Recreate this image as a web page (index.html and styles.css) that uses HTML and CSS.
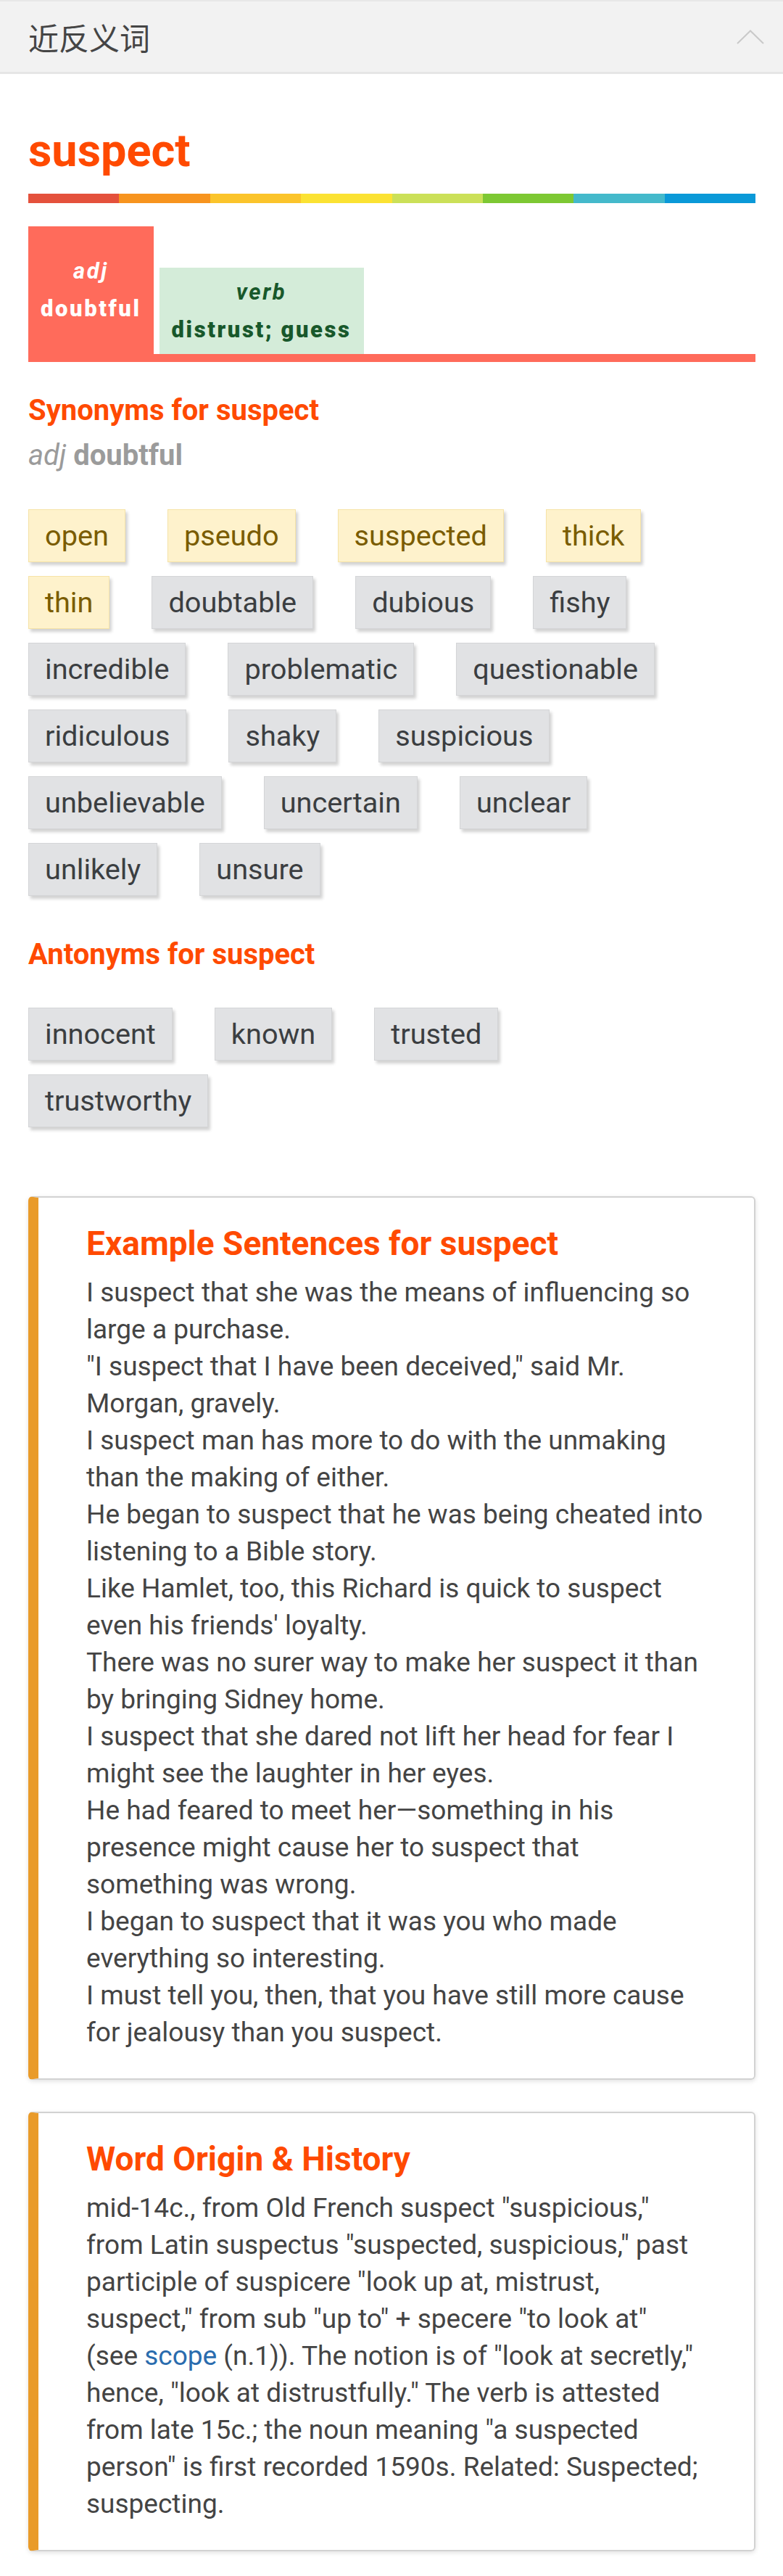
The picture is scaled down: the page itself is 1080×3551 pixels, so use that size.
FILE: index.html
```html
<!DOCTYPE html>
<html>

<head>
    <meta charset="UTF-8">
    <title>suspect | 近反义词</title>
    <meta name="viewport" content="width=device-width, initial-scale=1.0">
    <link rel="stylesheet" href="styles.css">
</head>

<body>
    <header class="panel-head">
        <span class="panel-title">近反义词</span>
        <svg class="chevron" width="38" height="20" viewBox="0 0 38 20">
            <polyline points="1,19 19,1.5 37,19" fill="none" stroke="#c9c9c9" stroke-width="2" />
        </svg>
    </header>

    <main class="thesaurus">
        <h1 class="word">suspect</h1>

        <div class="rainbow">
            <span class="c1"></span><span class="c2"></span><span class="c3"></span><span class="c4"></span>
            <span class="c5"></span><span class="c6"></span><span class="c7"></span><span class="c8"></span>
        </div>

        <div class="pos-tabs">
            <div class="pos-tab active">
                <i>adj</i>
                <b>doubtful</b>
            </div>
            <div class="pos-tab">
                <i>verb</i>
                <b>distrust; guess</b>
            </div>
        </div>

        <h2 class="section-title synonyms-title">Synonyms for suspect</h2>
        <p class="sense"><i>adj</i> <b>doubtful</b></p>

        <ul class="chips">
            <li class="chip close">open</li>
            <li class="chip close">pseudo</li>
            <li class="chip close">suspected</li>
            <li class="chip close">thick</li>
            <li class="chip close">thin</li>
            <li class="chip">doubtable</li>
            <li class="chip">dubious</li>
            <li class="chip">fishy</li>
            <li class="chip">incredible</li>
            <li class="chip">problematic</li>
            <li class="chip">questionable</li>
            <li class="chip">ridiculous</li>
            <li class="chip">shaky</li>
            <li class="chip">suspicious</li>
            <li class="chip">unbelievable</li>
            <li class="chip">uncertain</li>
            <li class="chip">unclear</li>
            <li class="chip">unlikely</li>
            <li class="chip">unsure</li>
        </ul>

        <h2 class="section-title antonyms-title">Antonyms for suspect</h2>

        <ul class="chips">
            <li class="chip">innocent</li>
            <li class="chip">known</li>
            <li class="chip">trusted</li>
            <li class="chip">trustworthy</li>
        </ul>

        <section class="card examples">
            <h3 class="card-title">Example Sentences for suspect</h3>
            <p>I suspect that she was the means of influencing so large a purchase.</p>
            <p>"I suspect that I have been deceived," said Mr. Morgan, gravely.</p>
            <p>I suspect man has more to do with the unmaking than the making of either.</p>
            <p>He began to suspect that he was being cheated into listening to a Bible story.</p>
            <p>Like Hamlet, too, this Richard is quick to suspect even his friends' loyalty.</p>
            <p>There was no surer way to make her suspect it than by bringing Sidney home.</p>
            <p>I suspect that she dared not lift her head for fear I might see the laughter in her eyes.</p>
            <p>He had feared to meet her—something in his presence might cause her to suspect that something was wrong.</p>
            <p>I began to suspect that it was you who made everything so interesting.</p>
            <p>I must tell you, then, that you have still more cause for jealousy than you suspect.</p>
        </section>

        <section class="card origin">
            <h3 class="card-title">Word Origin &amp; History</h3>
            <p>mid-14c., from Old French suspect "suspicious," from Latin suspectus "suspected, suspicious," past
                participle of suspicere "look up at, mistrust, suspect," from sub "up to" + specere "to look at"
                (see <a href="#scope">scope</a> (n.1)). The notion is of "look at secretly," hence, "look at
                distrustfully." The verb is attested from late 15c.; the noun meaning "a suspected person" is first
                recorded 1590s. Related: Suspected; suspecting.</p>
        </section>
    </main>
</body>

</html>
```

FILE: styles.css
```css
html {
    font-family: Roboto, 'Noto Sans', sans-serif;
}

body {
    margin: 0;
    background-color: #ffffff;
    color: #444444;
}

h1,
h2,
h3,
p,
ul {
    margin: 0;
    padding: 0;
}

ul>li {
    list-style: none;
}

/* collapsible panel header */
.panel-head {
    display: flex;
    flex-direction: row;
    align-items: center;
    justify-content: space-between;
    height: 97px;
    padding: 0 26px 0 39px;
    background-color: #f2f2f2;
    border-top: 2px solid #e8e8e8;
    border-bottom: 3px solid #e6e6e6;
}

.panel-title {
    font-family: 'Noto Sans CJK SC', sans-serif;
    font-size: 42px;
    color: #454545;
}

.chevron {
    display: block;
}

.thesaurus {
    padding: 0 38px 34px 39px;
}

.word {
    margin-top: 68px;
    font-size: 63px;
    line-height: 76px;
    font-weight: 700;
    color: #ff4a00;
}

.rainbow {
    display: flex;
    flex-direction: row;
    height: 13px;
    margin-top: 21px;
}

.rainbow>span {
    flex: 1;
}

.rainbow .c1 { background-color: #e4513c; }
.rainbow .c2 { background-color: #f7941e; }
.rainbow .c3 { background-color: #fbc42b; }
.rainbow .c4 { background-color: #fbe233; }
.rainbow .c5 { background-color: #cbe058; }
.rainbow .c6 { background-color: #7dc833; }
.rainbow .c7 { background-color: #44b9cb; }
.rainbow .c8 { background-color: #0a99d8; }

/* part of speech tabs */
.pos-tabs {
    display: flex;
    flex-direction: row;
    align-items: flex-end;
    gap: 8px;
    margin-top: 32px;
    border-bottom: 11px solid #ff6b5b;
}

.pos-tab {
    display: flex;
    flex-direction: column;
    align-items: center;
    padding: 8px 17px 7px;
    font-size: 31px;
    line-height: 52px;
    font-weight: 700;
    letter-spacing: 2.6px;
    background-color: #d4ecd9;
    color: #18582b;
}

.pos-tab.active {
    padding: 36px 17px;
    background-color: #ff6b5b;
    color: #ffffff;
}

.section-title {
    font-size: 40px;
    line-height: 48px;
    font-weight: 700;
    color: #ff4a00;
}

.synonyms-title {
    margin-top: 43px;
}

.antonyms-title {
    margin-top: 38px;
}

.sense {
    margin-top: 14px;
    font-size: 40px;
    line-height: 48px;
    color: #9b9b9b;
}

.sense>i {
    font-style: italic;
}

.chips {
    display: flex;
    flex-direction: row;
    flex-wrap: wrap;
    margin-top: 50px;
    padding-right: 12px;
}

.antonyms-title+.chips {
    margin-top: 49px;
}

.chip {
    margin: 0 58px 19px 0;
    padding: 0 22px;
    font-size: 39.7px;
    line-height: 71px;
    background-color: #e1e2e4;
    border: 1px solid #d4d5d7;
    color: #3b3e41;
    box-shadow: 3px 4px 4px rgba(0, 0, 0, 0.18);
}

.chip.close {
    background-color: #fef2cc;
    border-color: #f6e3a7;
    color: #7a5c00;
}

/* example and origin cards */
.card {
    margin-top: 76px;
    padding: 34px 69px 38px 66px;
    border: 2px solid #d2d2d2;
    border-left: 14px solid #e99b2a;
    border-radius: 6px;
    box-shadow: 0 2px 6px rgba(0, 0, 0, 0.12);
    font-size: 37px;
    line-height: 51px;
    color: #444444;
}

.card.origin {
    margin-top: 44px;
}

.card-title {
    margin-bottom: 13px;
    font-size: 46px;
    line-height: 58px;
    font-weight: 700;
    color: #ff4a00;
}

.card a {
    color: #2a6cae;
    text-decoration: none;
}
```
